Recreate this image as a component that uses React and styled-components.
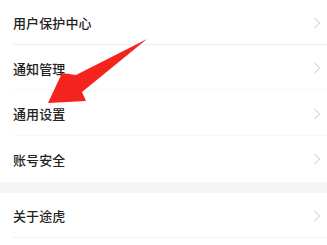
import React from "react";
import styled, { createGlobalStyle } from "styled-components";

const Global = createGlobalStyle`
  html, body { margin: 0; padding: 0; background: #ffffff; }
  body { font-family: "Noto Sans CJK SC", "Noto Sans", sans-serif; overflow: hidden; }
`;

const Page = styled.div`
  position: relative;
  width: 327px;
  height: 245px;
  background: #ffffff;
  overflow: hidden;
`;

const Group = styled.div`
  display: flex;
  flex-direction: column;
  background: #ffffff;
`;

const Row = styled.div`
  position: relative;
  height: 45.5px;
  display: flex;
  align-items: center;
  justify-content: space-between;
  padding: 0 6px 0 13px;
  box-sizing: border-box;
  &::after {
    content: "";
    display: ${(p) => (p.$divider ? "block" : "none")};
    position: absolute;
    left: 13px;
    right: 0;
    bottom: 1px;
    height: 1px;
    background: ${(p) => p.$dividerColor || "#f3f3f3"};
  }
`;

const Label = styled.span`
  font-size: 13px;
  font-weight: 500;
  color: #222222;
  letter-spacing: 0.1px;
`;

const Band = styled.div`
  height: 11px;
  background: #f5f5f5;
`;

const Chevron = () => (
  <svg width="8" height="12" viewBox="0 0 8 12">
    <path d="M1.5 0.8 L6.5 6 L1.5 11.2" fill="none" stroke="#c4c4c4" strokeWidth="1" />
  </svg>
);

const ArrowLayer = styled.svg`
  position: absolute;
  left: 0;
  top: 0;
  pointer-events: none;
`;

const items1 = [
  { t: "用户保护中心", c: "#eeeeee" },
  { t: "通知管理", c: "#f8f8f8" },
  { t: "通用设置", c: "#f8f8f8" },
  { t: "账号安全", c: null },
];

export default function App() {
  return (
    <Page>
      <Global />
      <Group>
        {items1.map((it) => (
          <Row key={it.t} $divider={!!it.c} $dividerColor={it.c}>
            <Label>{it.t}</Label>
            <Chevron />
          </Row>
        ))}
      </Group>
      <Band />
      <Group>
        <Row $divider $dividerColor="#f2f2f2">
          <Label>关于途虎</Label>
          <Chevron />
        </Row>
      </Group>
      <ArrowLayer width="327" height="245" viewBox="0 0 327 245">
        <polygon
          points="147,39 76,75 62,73 48,103 86,101 82,92"
          fill="#f4231d"
        />
      </ArrowLayer>
    </Page>
  );
}
